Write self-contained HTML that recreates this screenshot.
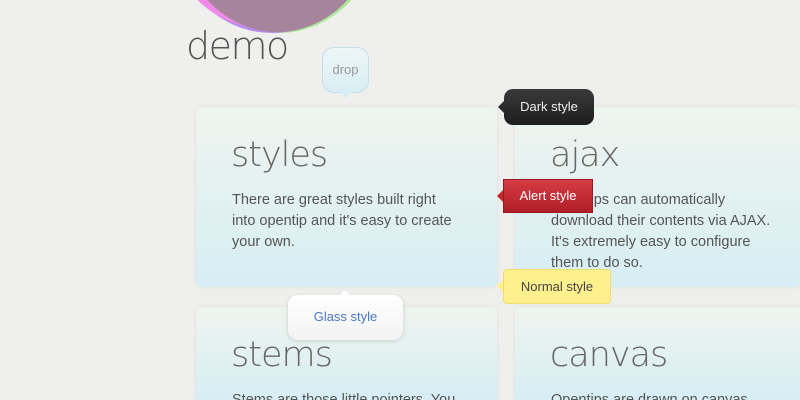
<!DOCTYPE html>
<html style="overflow:hidden;height:400px"><head><style>
body{margin:0;width:800px;height:400px;overflow:hidden;background:#efefed;font-family:"Liberation Sans",sans-serif;position:relative}
.circ{position:absolute;border-radius:50%}
.card{position:absolute;background:linear-gradient(#eff4ee,#d6eef4);border-radius:5px;box-shadow:0 0 4px rgba(0,0,0,.08);overflow:hidden}
.card h2{position:absolute;left:35px;top:28px;margin:0;font-size:35px;color:#666;letter-spacing:-1px;font-family:"DejaVu Sans",sans-serif;font-weight:200}
.card p{position:absolute;left:36px;top:83px;margin:0;font-size:14.5px;line-height:21px;color:#555;white-space:nowrap}
.tip{position:absolute;font-size:13px;text-align:center;box-sizing:border-box}
</style></head><body>
<div class="circ" style="left:184px;top:-180px;width:200px;height:208px;background:#f4f18c"></div>
<div class="circ" style="left:179px;top:-180px;width:200px;height:213px;background:#a9e99a"></div>
<div class="circ" style="left:172px;top:-180px;width:200px;height:213px;background:#b58ce8"></div>
<div class="circ" style="left:166px;top:-180px;width:198px;height:208px;background:#f08ae8"></div>
<div class="circ" style="left:180px;top:-180px;width:195px;height:212px;background:#a6849c"></div>
<div style="position:absolute;left:186px;top:24px;font-size:38px;color:#555;font-family:'DejaVu Sans',sans-serif;font-weight:200;letter-spacing:-1.5px">demo</div>

<div class="card" style="left:196px;top:107px;width:301px;height:180px"><h2>styles</h2><p>There are great styles built right<br>into opentip and it's easy to create<br>your own.</p></div>
<div class="card" style="left:515px;top:107px;width:285px;height:180px"><h2>ajax</h2><p>Opentips can automatically<br>download their contents via AJAX.<br>It's extremely easy to configure<br>them to do so.</p></div>
<div class="card" style="left:196px;top:307px;width:301px;height:93px;border-radius:5px 5px 0 0"><h2>stems</h2><p>Stems are those little pointers. You</p></div>
<div class="card" style="left:515px;top:307px;width:285px;height:93px;border-radius:5px 0 0 0"><h2>canvas</h2><p>Opentips are drawn on canvas</p></div>

<div class="tip" style="left:322px;top:47px;width:47px;height:46px;border-radius:12px;background:linear-gradient(#eef6f6,#d8eef4);border:1px solid #c6e0e8;color:#999;line-height:44px">drop</div>
<div style="position:absolute;left:340px;top:92px;border:6px solid transparent;border-top-color:#d8eef4;border-bottom:0"></div>

<div class="tip" style="left:504px;top:89px;width:90px;height:36px;border-radius:9px;background:linear-gradient(#3a3a3a,#1e1e1e);color:#eee;line-height:36px">Dark style</div>
<div style="position:absolute;left:498px;top:101px;border:6px solid transparent;border-right-color:#2a2a2a;border-left:0"></div>

<div class="tip" style="left:503px;top:179px;width:90px;height:34px;background:linear-gradient(#d63c44,#b01e26);border:1px solid #9a1a20;color:#fff;line-height:32px">Alert style</div>
<div style="position:absolute;left:497px;top:190px;border:6px solid transparent;border-right-color:#c4282f;border-left:0"></div>

<div class="tip" style="left:503px;top:269px;width:108px;height:35px;border-radius:4px;background:#fff08e;border:1px solid #f0dc70;color:#444;line-height:33px">Normal style</div>
<div style="position:absolute;left:497px;top:280px;border:6px solid transparent;border-right-color:#fff08e;border-left:0"></div>

<div class="tip" style="left:288px;top:295px;width:115px;height:45px;border-radius:10px;background:linear-gradient(#fff,#f2f2f2);box-shadow:0 1px 5px rgba(0,0,0,.15);color:#4a78c0;line-height:44px">Glass style</div>
<div style="position:absolute;left:340px;top:290px;border:5px solid transparent;border-bottom-color:#fff;border-top:0"></div>
</body></html>
